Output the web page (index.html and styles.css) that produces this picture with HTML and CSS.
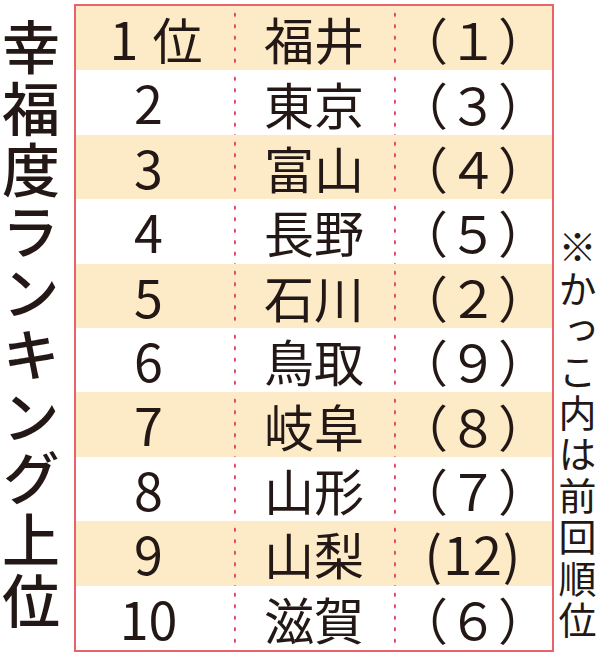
FILE: index.html
```html
<!DOCTYPE html>
<html lang="ja">
<head>
<meta charset="utf-8">
<link rel="stylesheet" href="styles.css">
</head>
<body>
<div class="page">
  <div class="title-col"><div class="title">幸福度ランキング上位</div></div>
  <div class="table">
    <div class="row shade"><div class="cell rank first">1<span class="unit">位</span></div><div class="cell pref">福井</div><div class="cell prev">（１）</div></div>
    <div class="row"><div class="cell rank">2</div><div class="cell pref">東京</div><div class="cell prev">（３）</div></div>
    <div class="row shade"><div class="cell rank">3</div><div class="cell pref">富山</div><div class="cell prev">（４）</div></div>
    <div class="row"><div class="cell rank">4</div><div class="cell pref">長野</div><div class="cell prev">（５）</div></div>
    <div class="row shade"><div class="cell rank">5</div><div class="cell pref">石川</div><div class="cell prev">（２）</div></div>
    <div class="row"><div class="cell rank">6</div><div class="cell pref">鳥取</div><div class="cell prev">（９）</div></div>
    <div class="row shade"><div class="cell rank">7</div><div class="cell pref">岐阜</div><div class="cell prev">（８）</div></div>
    <div class="row"><div class="cell rank">8</div><div class="cell pref">山形</div><div class="cell prev">（７）</div></div>
    <div class="row shade"><div class="cell rank">9</div><div class="cell pref">山梨</div><div class="cell prev narrow">(12)</div></div>
    <div class="row"><div class="cell rank">10</div><div class="cell pref">滋賀</div><div class="cell prev">（６）</div></div>
  </div>
  <div class="note-col"><div class="note">※かっこ内は前回順位</div></div>
</div>
</body>
</html>
```
FILE: styles.css
```css
html, body {
  margin: 0;
  padding: 0;
  background: #ffffff;
}
body {
  font-family: "Noto Sans CJK JP", "Noto Sans", sans-serif;
  color: #231815;
}
.page {
  display: flex;
  width: 600px;
  height: 652px;
}
.title-col {
  width: 74px;
  box-sizing: border-box;
  padding-left: 2px;
  display: flex;
  align-items: center;
}
.title {
  writing-mode: vertical-rl;
  font-size: 58px;
  line-height: 58px;
  letter-spacing: 3.6px;
  font-weight: 500;
}
.table {
  margin-top: 4px;
  width: 480px;
  height: 648px;
  box-sizing: border-box;
  border: 2px solid #e8626a;
  display: grid;
  grid-template-rows: repeat(10, 1fr);
}
.row {
  display: grid;
  grid-template-columns: 158px 160px 1fr;
  align-items: stretch;
}
.row.shade {
  background: #fcebc6;
}
.cell {
  display: flex;
  align-items: center;
  justify-content: center;
  line-height: 1.2;
}
.rank {
  font-size: 52px;
  padding-right: 13px;
}
.rank.first {
  padding-right: 0;
  padding-left: 2px;
}
.unit {
  margin-left: 14px;
  font-size: 50px;
}
.pref {
  font-size: 50px;
}
.prev {
  font-size: 50px;
}
.prev.narrow {
  font-size: 52px;
  letter-spacing: 1px;
}
.pref, .prev {
  background-image: radial-gradient(circle at center, #e04a68 1.9px, rgba(224, 74, 104, 0) 2.5px);
  background-size: 8px 11.5px;
  background-position: -4px 3px;
  background-repeat: repeat-y;
}
.note-col {
  flex: 1;
  display: flex;
  justify-content: center;
  align-items: flex-end;
  padding-bottom: 10px;
}
.note {
  writing-mode: vertical-rl;
  font-size: 38px;
  line-height: 38px;
  letter-spacing: 3.4px;
}
```
